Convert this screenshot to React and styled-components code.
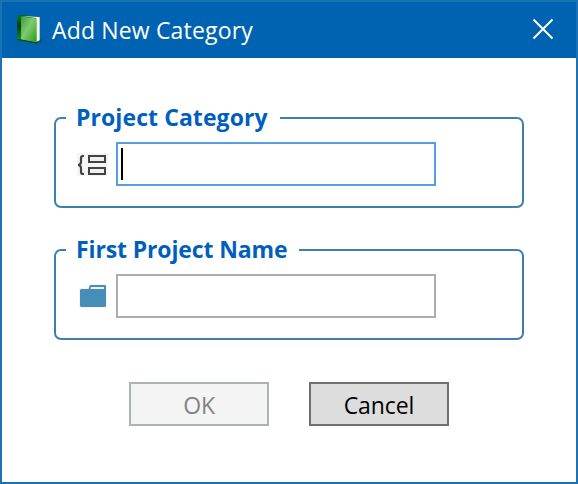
import React from "react";
import styled, { createGlobalStyle } from "styled-components";

const GlobalStyle = createGlobalStyle`
  * { box-sizing: border-box; }
  body { margin: 0; background: #fff; }
`;

const Dialog = styled.div`
  width: 578px;
  height: 484px;
  display: flex;
  flex-direction: column;
  border: 2px solid #1a71b3;
  background: #fff;
  font-family: "Open Sans", "Noto Sans", sans-serif;
  font-size: 23px;
  line-height: 32px;
`;

const TitleBar = styled.header`
  height: 56px;
  flex: none;
  display: flex;
  align-items: center;
  padding: 0 22px 0 14px;
  background: #0063b1;
  color: #fff;
`;

const Title = styled.h1`
  flex: 1;
  margin: 0 0 0 6px;
  font-size: 23px;
  font-weight: 400;
  letter-spacing: 0.16px;
  white-space: nowrap;
`;

const CloseButton = styled.button`
  width: 22px;
  height: 22px;
  margin-bottom: 2px;
  padding: 0;
  border: 0;
  background: none;
  svg { display: block; }
`;

const Content = styled.main`
  display: flex;
  flex-direction: column;
  gap: 41px;
  padding: 59px 52px 0;
`;

const Group = styled.section`
  height: 91px;
  border: 2px solid #3c7fb1;
  border-radius: 7px;
  padding-left: 10px;
`;

const Legend = styled.h2`
  width: ${(p) => p.$width}px;
  height: 32px;
  margin: -18px 0 0;
  padding-left: 10px;
  background: #fff;
  color: #005fbe;
  font-size: 23px;
  line-height: 32px;
  font-weight: 700;
  letter-spacing: ${(p) => p.$tracking}px;
  white-space: nowrap;
`;

const Field = styled.label`
  display: flex;
  align-items: center;
  margin-top: 9px;
  padding-left: 11px;
  gap: 8px;
  svg { flex: none; }
`;

const Entry = styled.div`
  width: 320px;
  height: 44px;
  display: flex;
  align-items: center;
  padding-left: 3px;
  border: 2px solid ${(p) => (p.$focused ? "#569de5" : "#abadb3")};
  background: #fff;
`;

const Caret = styled.span`
  width: 2px;
  height: 32px;
  background: #000;
`;

const Actions = styled.footer`
  display: flex;
  gap: 40px;
  margin: 42px 0 0 127px;
`;

const Button = styled.button`
  width: 140px;
  height: 44px;
  padding: 2px 0 0;
  font: inherit;
  letter-spacing: ${(p) => p.$tracking}px;
  border: 2px solid #707070;
  background: #ddd;
  color: #000;
  &:disabled {
    border-color: #adb2b5;
    background: #f4f4f4;
    color: #838383;
  }
`;

const BookIcon = () => (
  <svg width="30" height="32" viewBox="0 0 30 32">
    <defs>
      <linearGradient id="cover" x1="0" y1="0" x2="1" y2="1">
        <stop offset="0" stopColor="#3d9d3c" />
        <stop offset=".45" stopColor="#7ecb6e" />
        <stop offset="1" stopColor="#259c1f" />
      </linearGradient>
      <linearGradient id="spine" x1="0" y1="0" x2="0" y2="1">
        <stop offset="0" stopColor="#0b762b" />
        <stop offset=".4" stopColor="#063d18" />
        <stop offset="1" stopColor="#118a25" />
      </linearGradient>
    </defs>
    <path d="M20 29l7-5-2 4-5 2z" fill="#17435f" opacity=".7" />
    <path d="M1 1.500L5 1l19 1.500V27l-3.500 2.500L1 25.500z" fill="#0b6422" />
    <path d="M5 2l18.700 1v23.300L20 28V4z" fill="#f5f7ee" />
    <path d="M1 2l4 .8v23L1 25z" fill="url(#spine)" />
    <path d="M5 2.500l15.700 2v24L5 25.500z" fill="url(#cover)" />
    <path d="M1 25l4 .5 15.700 3v1L1 26z" fill="#074714" />
  </svg>
);

const CategoryIcon = () => (
  <svg width="31" height="24" viewBox="0 0 31 24">
    <path d="M0 1h31v23H0z" fill="#f5f5f5" />
    <path d="M7 4H6Q4 4 4 6v4Q4 12.500 1.200 13Q4 13.500 4 16v4q0 2 2 2h1" fill="none" stroke="#424242" strokeWidth="2.200" />
    <path d="M12 4h16v6H12zM12 16h16v6H12z" fill="#f0eff1" stroke="#424242" strokeWidth="2" />
  </svg>
);

const FolderIcon = () => (
  <svg width="31" height="26" viewBox="0 0 31 26">
    <path d="M2 5h8l1-4h19v24H2z" fill="#f5f5f5" />
    <path d="M4 6h7.500l1.500-4h15l1 1v20l-1 1H4l-1-1V7z" fill="#468eb7" />
    <path d="M14 4h13v2H13.500z" fill="#f0eff1" />
  </svg>
);

const CloseIcon = () => (
  <svg width="22" height="22" viewBox="0 0 22 22">
    <path d="M1.500 1.500l19 19M20.500 1.500l-19 19" stroke="#fff" strokeWidth="2" />
  </svg>
);

export default function App() {
  return (
    <>
      <GlobalStyle />
      <Dialog role="dialog">
        <TitleBar>
          <BookIcon />
          <Title>Add New Category</Title>
          <CloseButton aria-label="Close"><CloseIcon /></CloseButton>
        </TitleBar>
        <Content>
          <Group>
            <Legend $width={214} $tracking={0.08}>Project Category</Legend>
            <Field>
              <CategoryIcon />
              <Entry $focused><Caret /></Entry>
            </Field>
          </Group>
          <Group>
            <Legend $width={233} $tracking={-0.13}>First Project Name</Legend>
            <Field>
              <FolderIcon />
              <Entry />
            </Field>
          </Group>
        </Content>
        <Actions>
          <Button disabled $tracking={-0.3}>OK</Button>
          <Button $tracking={-0.1}>Cancel</Button>
        </Actions>
      </Dialog>
    </>
  );
}
